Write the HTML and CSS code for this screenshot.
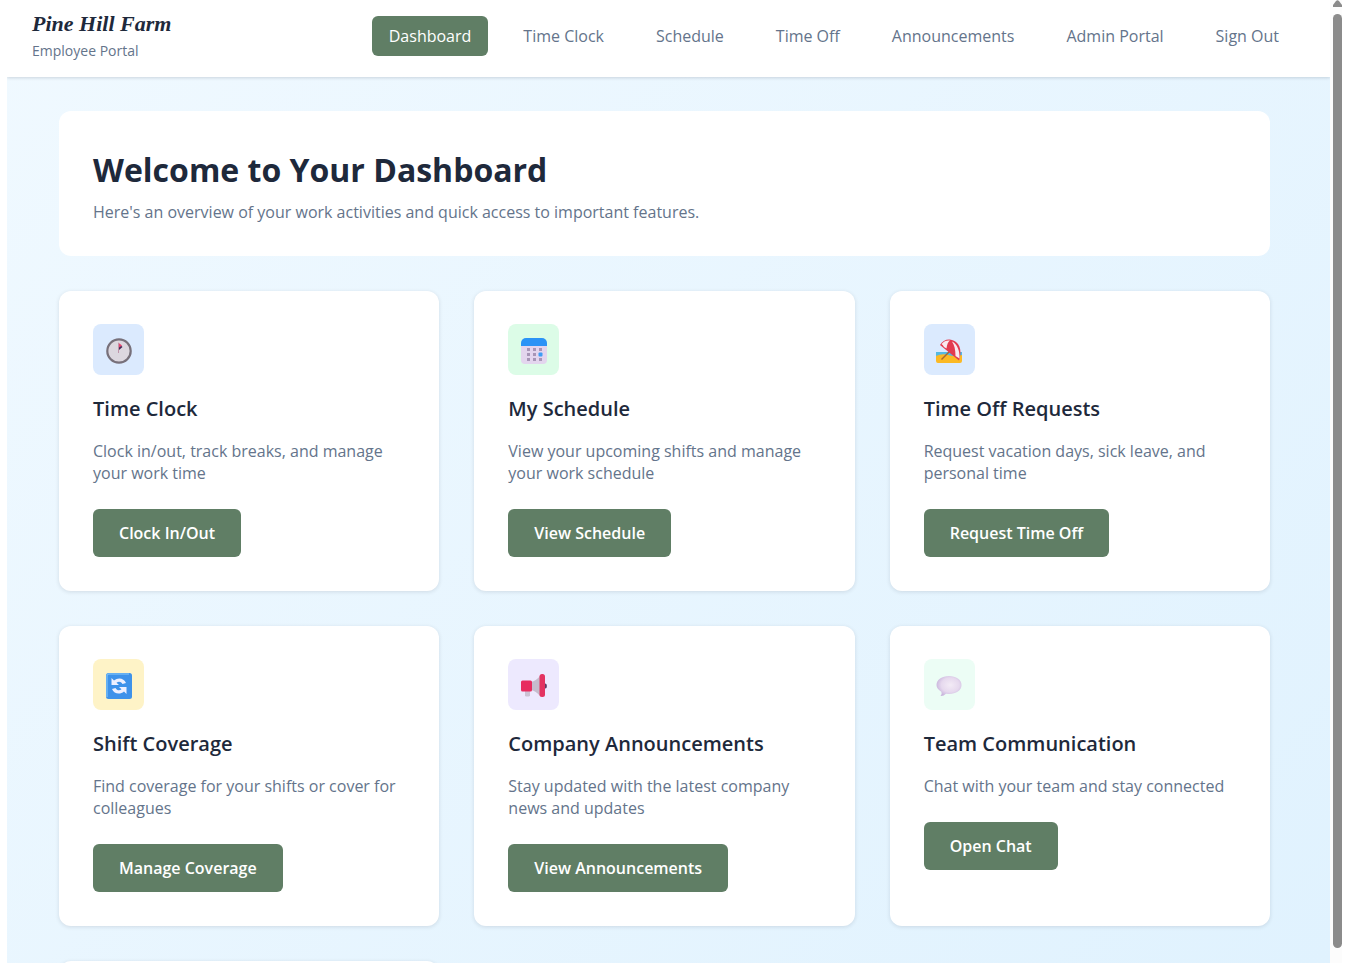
FILE: index.html
```
<!DOCTYPE html>
<html lang="en">
<head>
<meta charset="utf-8">
<title>Pine Hill Farm – Employee Portal</title>
<link rel="stylesheet" href="styles.css">
</head>
<body>
<div class="window">
  <div class="page">
    <header class="topbar">
      <div class="brand">
        <span class="brand-name">Pine Hill Farm</span>
        <span class="brand-sub">Employee Portal</span>
      </div>
      <nav class="nav">
        <a class="nav-link active" href="#">Dashboard</a>
        <a class="nav-link" href="#">Time Clock</a>
        <a class="nav-link" href="#">Schedule</a>
        <a class="nav-link" href="#">Time Off</a>
        <a class="nav-link" href="#">Announcements</a>
        <a class="nav-link" href="#">Admin Portal</a>
        <a class="nav-link" href="#">Sign Out</a>
      </nav>
    </header>
    <main class="content">
      <section class="welcome">
        <h1>Welcome to Your Dashboard</h1>
        <p>Here's an overview of your work activities and quick access to important features.</p>
      </section>
      <div class="cards">
        <article class="card">
          <div class="icon blue">
            <svg viewBox="0 0 26 26" width="26" height="26" aria-hidden="true">
              <circle cx="13" cy="13" r="11.7" fill="#dcd7df" stroke="#77707a" stroke-width="2.2"/>
              <path d="M12.2 4.5 L16 7.500 L13.2 11 L12 9Z" fill="#e5466f"/>
              <path d="M13 12 L13 9.500 L15.500 8 L16.500 9 Z" fill="#432a58"/>
              <path d="M12.500 5v10" stroke="#bf94a9" stroke-width="1"/>
            </svg>
          </div>
          <h2>Time Clock</h2>
          <p>Clock in/out, track breaks, and manage your work time</p>
          <button class="btn" type="button">Clock In/Out</button>
        </article>
        <article class="card">
          <div class="icon green">
            <svg viewBox="0 0 26 26" width="26" height="26" aria-hidden="true">
              <path d="M0 7h26v15a4 4 0 0 1-4 4H4a4 4 0 0 1-4-4z" fill="#e3d5ee"/>
              <path d="M0 8V5a5 5 0 0 1 5-5h16a5 5 0 0 1 5 5v3z" fill="#2b93f6"/>
              <g fill="#a795b7"><rect x="6" y="10" width="3" height="3"/><rect x="12" y="10" width="3" height="3"/><rect x="18" y="10" width="3" height="3"/><rect x="6" y="15" width="3" height="3"/><rect x="12" y="15" width="3" height="3"/><rect x="6" y="20" width="3" height="3"/><rect x="12" y="20" width="3" height="3"/><rect x="18" y="20" width="3" height="3"/></g>
              <rect x="17.500" y="14.500" width="4" height="4" rx="1" fill="#3d9df5"/>
            </svg>
          </div>
          <h2>My Schedule</h2>
          <p>View your upcoming shifts and manage your work schedule</p>
          <button class="btn" type="button">View Schedule</button>
        </article>
        <article class="card">
          <div class="icon blue">
            <svg viewBox="0 0 26 26" width="26" height="26" aria-hidden="true">
              <path d="M0 14h26v4H0z" fill="#54b9e3"/>
              <path d="M0 18q6-3 12-1t14 0v6a2 2 0 0 1-2 2H2a2 2 0 0 1-2-2z" fill="#fbb924"/>
              <path d="M5.500 21.500L14 13" fill="none" stroke="#a8672d" stroke-width="1.500"/>
              <path d="M4 7C7 1 15-.5 20 4c5 4 5.500 11 3 18.500z" fill="#e33b50"/>
              <path d="M5.500 6C8 3 11 2 14 2.500c-2 1.500-3 4-3.500 8L8 9q-1-2-2.500-3z" fill="#fae9ef"/>
              <path d="M16 3.500c5 2.500 8 9 7.500 17L19.500 18c0-6-1-11-3.500-14.500z" fill="#fae9ef"/>
            </svg>
          </div>
          <h2>Time Off Requests</h2>
          <p>Request vacation days, sick leave, and personal time</p>
          <button class="btn" type="button">Request Time Off</button>
        </article>
        <article class="card">
          <div class="icon yellow">
            <svg viewBox="0 0 26 26" width="26" height="26" aria-hidden="true">
              <rect width="26" height="26" rx="2.500" fill="#3e92ea"/>
              <path d="M1 24V3q0-2 2-2h20" fill="none" stroke="#72b9f6" stroke-width="1.500"/>
              <path d="M5.500 5l2.500 2.500C12 4 18 5 20 10l-3.500 1c-1.500-2.500-4-3-6-1.200L13 12H5.500z" fill="#eef0ff"/>
              <path d="M20.500 21L18 18.500C14 22 8 21 6 16l3.500-1c1.500 2.500 4 3 6 1.200L13 14h7.500z" fill="#eef0ff"/>
            </svg>
          </div>
          <h2>Shift Coverage</h2>
          <p>Find coverage for your shifts or cover for colleagues</p>
          <button class="btn" type="button">Manage Coverage</button>
        </article>
        <article class="card">
          <div class="icon purple">
            <svg viewBox="0 0 26 26" width="26" height="26" aria-hidden="true">
              <path d="M4 16h5v7q-3 1-5 0z" fill="#cbc2d4"/>
              <ellipse cx="24.300" cy="13" rx="1.600" ry="2.500" fill="#5b3c66"/>
              <path d="M10 9q5-1 9-6v20q-4-5-9-6z" fill="#c6bccd"/>
              <rect x="0" y="7.500" width="11" height="11" rx="1.500" fill="#e72d60"/>
              <rect x="18.500" y="1" width="5.500" height="23" rx="2.500" fill="#e33361"/>
            </svg>
          </div>
          <h2>Company Announcements</h2>
          <p>Stay updated with the latest company news and updates</p>
          <button class="btn" type="button">View Announcements</button>
        </article>
        <article class="card">
          <div class="icon mint">
            <svg viewBox="0 0 26 26" width="26" height="26" aria-hidden="true">
              <defs><radialGradient id="bubble" cx=".55" cy=".45" r=".6"><stop offset="0" stop-color="#f3ebf6"/><stop offset=".6" stop-color="#e6d9ee"/><stop offset="1" stop-color="#c5b0da"/></radialGradient></defs>
              <path d="M13 3c7 0 12.500 3.500 12.500 9S20 21 13 21l-3-.3Q8 23 4.500 23q2-2 .8-4.300C2.500 17 .5 15 .5 12 .5 6.500 6 3 13 3z" fill="url(#bubble)"/>
            </svg>
          </div>
          <h2>Team Communication</h2>
          <p>Chat with your team and stay connected</p>
          <button class="btn" type="button">Open Chat</button>
        </article>
        <article class="card"></article>
      </div>
    </main>
  </div>
  <div class="scrollbar" aria-hidden="true">
    <svg class="scroll-up" viewBox="0 0 9 7" width="9" height="7"><path d="M0 7V5L3 1q1.500-1.500 3 0l3 4v2z" fill="#8b8b8b"/></svg>
    <div class="thumb"></div>
  </div>
</div>
</body>
</html>
```
FILE: styles.css
```
* { box-sizing: border-box; }

body {
  margin: 0;
  background: #fff;
  color: #1e293b;
  font-family: "Open Sans", "Noto Sans", sans-serif;
  font-size: 16px;
}

h1, h2, p { margin: 0; }

.window {
  display: flex;
  height: 100vh;
  padding: 0 9px 0 7px;
  overflow: hidden;
}

.page {
  flex: 1;
  min-width: 0;
  overflow: hidden;
  background: linear-gradient(135deg, #f0f9ff 0%, #e0f2fe 100%);
}

.topbar {
  display: flex;
  align-items: flex-start;
  justify-content: space-between;
  height: 77px;
  padding: 8px 34px 0 25px;
  background: #fff;
  box-shadow: 0 1px 3px rgba(15, 23, 42, 0.16);
}

.brand {
  display: flex;
  flex-direction: column;
  white-space: nowrap;
}

.brand-name {
  font: italic bold 22px/32px "Liberation Serif", serif;
}

.brand-sub {
  color: #64748b;
  font-size: 14px;
  line-height: 22px;
}

.nav {
  display: flex;
  gap: 18px;
  padding-top: 8px;
}

.nav-link {
  padding: 0 17px;
  border-radius: 6px;
  color: #64748b;
  line-height: 40px;
  text-decoration: none;
  white-space: nowrap;
}

.nav-link.active {
  background: #607e65;
  color: #fff;
}

.content {
  padding: 34px 60px 34px 52px;
}

.welcome {
  margin-bottom: 35px;
  padding: 34px 34px 31px;
  border-radius: 12px;
  background: #fff;
}

.welcome h1 {
  margin-bottom: 4px;
  font-size: 32px;
  font-weight: 700;
  line-height: 50px;
}

.welcome p {
  color: #64748b;
  line-height: 26px;
}

.cards {
  display: grid;
  grid-template-columns: repeat(3, 1fr);
  gap: 35px;
}

.card {
  min-height: 300px;
  padding: 33px 34px;
  border-radius: 12px;
  background: #fff;
  box-shadow: 0 1px 4px rgba(15, 23, 42, 0.12);
}

.icon {
  display: grid;
  place-items: center;
  width: 51px;
  height: 51px;
  padding-top: 2px;
  border-radius: 8px;
}

.blue { background: #dbeafe; }
.green { background: #dcfce7; }
.yellow { background: #fef3c7; }
.purple { background: #ede9fe; }
.mint { background: #ecfdf5; }

.card h2 {
  margin: 18px 0 15px;
  font-size: 20px;
  font-weight: 600;
  line-height: 32px;
}

.card p {
  margin-bottom: 25px;
  color: #64748b;
  line-height: 22px;
}

.btn {
  padding: 0 26px;
  border: 0;
  border-radius: 6px;
  background: #607e65;
  color: #fff;
  font: 600 16px/48px "Open Sans", "Noto Sans", sans-serif;
}

.scrollbar {
  display: flex;
  flex-direction: column;
  align-items: flex-end;
  width: 12px;
  padding-bottom: 15px;
  background: #fcfcfc;
}

.scroll-up {
  flex: none;
  margin-bottom: 7px;
}

.thumb {
  flex: 1;
  width: 9px;
  border-radius: 5px;
  background: #8b8b8b;
}
```
